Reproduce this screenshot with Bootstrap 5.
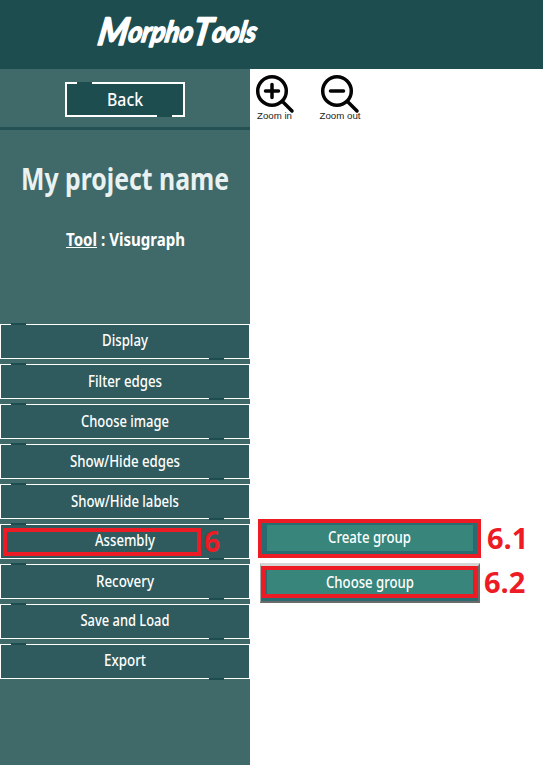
<!DOCTYPE html>
<html lang="en">
<head>
<meta charset="utf-8">
<meta name="viewport" content="width=device-width, initial-scale=1">
<title>MorphoTools</title>
<link href="https://cdn.jsdelivr.net/npm/bootstrap@5.3.0/dist/css/bootstrap.min.css" rel="stylesheet">
<style>
body{font-family:"Noto Sans","Open Sans",sans-serif;background:#fff;overflow:hidden;color:#fff}
.topbar{height:69px;background:#1e4d50}
.topbar svg,.tool svg,.title-art{display:block}
.title-art{overflow:visible}
.side{width:250px;height:696px;background:#406969}
.back-zone{height:61px;padding-top:13px;border-bottom:3px solid #245154}
.btn-frame{border-radius:0;color:#fff;padding:0;position:relative;white-space:nowrap}
.btn-frame:hover{color:#fff}
.btn-frame::before,.btn-frame::after{content:"";position:absolute;width:15px;height:2px;background:#1e4d50}
.btn-back{width:120px;height:35px;border:2px solid #fff;background:#1e4d50}
.btn-back::before{left:10px;top:-2px}
.btn-back::after{right:11px;bottom:-2px}
.menu{gap:5px;margin-top:69px}
.btn-side{width:250px;height:35px;border:1px solid #fff;background:#2f5b5e;display:block}
.btn-side::before{left:10px;top:-2px}
.btn-side::after{right:25px;bottom:-2px}
.btn-side svg,.btn-back svg,.grp svg{display:block;width:100%;height:100%}
text{font-family:"Noto Sans","Open Sans",sans-serif;text-anchor:middle;fill:#fff;font-weight:500}
.btn-side text,.grp text{font-size:15.5px}
.t-dark text{font-family:"Liberation Sans",sans-serif;font-weight:400;fill:#222;font-size:9.5px}
.brand{font-family:Lato,sans-serif;font-style:italic;font-weight:700;stroke:#fff;stroke-width:1.6px;stroke-linejoin:round;text-anchor:start}
.ring{position:absolute;border:4px solid #ed1c24;pointer-events:none}
.ring-six{left:2px;top:3px;width:198px;height:28px}
.num{font-family:"Open Sans","Noto Sans",sans-serif;font-weight:700;color:#ed1c24;line-height:1}
.num-six{position:absolute;left:203px;top:2px;font-size:28px}
.groups{margin-left:8px;margin-top:394px}
.grp{border-radius:0;padding:0;background:#37857b}
.grp-create{width:223px;height:39px;border:4px solid #ed1c24;background:#286c72;padding:2px 4px 3px 5px}
.grp-choose{width:220px;height:40px;margin-left:2px;background:#286c72;border-top:3px solid #d5d5d5;border-bottom:2px solid #6b6b6b;border-right:2px solid #6b6b6b;border-left:1px solid #aaa}
.ring-in{width:217px;height:32px;border:4px solid #ed1c24;padding:0 1px 0 2px}
.second{margin-top:5px}
.face{background:#37857b;height:100%}
.num-g{font-size:29px;margin-top:4px}
.num-a{margin-left:6px}
.num-b{margin-left:4px}
</style>
<script src="https://cdn.jsdelivr.net/npm/bootstrap@5.3.0/dist/js/bootstrap.bundle.min.js"></script>
</head>
<body>
<header class="topbar">
<svg width="300" height="69" role="img" aria-label="MorphoTools"><g transform="translate(8.500 0) skewX(-10)"><text class="brand" x="96" y="43" font-size="29" textLength="158" lengthAdjust="spacingAndGlyphs"><tspan font-size="38" dy="2">M</tspan><tspan dy="-3">orpho</tspan><tspan font-size="38" dy="3">T</tspan><tspan dy="-3">ools</tspan></text></g></svg>
</header>
<div class="d-flex">
<aside class="side flex-shrink-0">
<div class="back-zone d-flex justify-content-center">
<button class="btn btn-frame btn-back"><svg><text x="58" y="22" font-size="18" textLength="36" lengthAdjust="spacingAndGlyphs">Back</text></svg></button>
</div>
<svg class="title-art" width="250" height="125">
<text x="125" y="60" font-size="30" style="fill:#e9f1f1;font-weight:700" textLength="208" lengthAdjust="spacingAndGlyphs">My project name</text>
<text x="81.5" y="116" font-size="17.500" style="font-weight:700" textLength="31" lengthAdjust="spacingAndGlyphs">Tool</text>
<path d="M66 117.500H97" stroke="#fff"/>
<text x="143" y="116" font-size="17.500" style="font-weight:700" textLength="84" lengthAdjust="spacingAndGlyphs">: Visugraph</text>
</svg>
<nav class="menu d-flex flex-column">
<button class="btn btn-frame btn-side"><svg><text x="124" y="21" textLength="46" lengthAdjust="spacingAndGlyphs">Display</text></svg></button>
<button class="btn btn-frame btn-side"><svg><text x="124" y="22" textLength="74" lengthAdjust="spacingAndGlyphs">Filter edges</text></svg></button>
<button class="btn btn-frame btn-side"><svg><text x="124" y="22" textLength="88" lengthAdjust="spacingAndGlyphs">Choose image</text></svg></button>
<button class="btn btn-frame btn-side"><svg><text x="124" y="22" textLength="110" lengthAdjust="spacingAndGlyphs">Show/Hide edges</text></svg></button>
<button class="btn btn-frame btn-side"><svg><text x="124" y="22" textLength="108" lengthAdjust="spacingAndGlyphs">Show/Hide labels</text></svg></button>
<button class="btn btn-frame btn-side"><svg><text x="124" y="21" textLength="60" lengthAdjust="spacingAndGlyphs">Assembly</text></svg><span class="ring ring-six"></span><span class="num num-six">6</span></button>
<button class="btn btn-frame btn-side"><svg><text x="124" y="22" textLength="58" lengthAdjust="spacingAndGlyphs">Recovery</text></svg></button>
<button class="btn btn-frame btn-side"><svg><text x="124" y="21" textLength="89" lengthAdjust="spacingAndGlyphs">Save and Load</text></svg></button>
<button class="btn btn-frame btn-side"><svg><text x="124" y="21" textLength="42" lengthAdjust="spacingAndGlyphs">Export</text></svg></button>
</nav>
</aside>
<main class="flex-grow-1">
<div class="tool t-dark">
<svg width="130" height="56">
<g fill="none" stroke="#050505" stroke-width="3.5" stroke-linecap="round">
<circle cx="22" cy="22" r="14.3"/><path d="M32.500 32.500L42 42M15.500 22H28.500M22 15.500V28.500"/>
<circle cx="87" cy="22" r="14.300"/><path d="M97.500 32.500L107 42M80.500 22H93.500"/>
</g>
<text x="24.500" y="50" textLength="35" lengthAdjust="spacingAndGlyphs">Zoom in</text>
<text x="90" y="50" textLength="41" lengthAdjust="spacingAndGlyphs">Zoom out</text>
</svg>
</div>
<div class="groups">
<div class="d-flex">
<button class="btn grp grp-create flex-shrink-0"><div class="face"><svg><text x="102.500" y="18" textLength="83" lengthAdjust="spacingAndGlyphs">Create group</text></svg></div></button>
<span class="num num-g num-a">6.1</span>
</div>
<div class="d-flex second">
<div class="grp grp-choose flex-shrink-0"><div class="ring-in"><div class="face"><svg><text x="103" y="18" textLength="88" lengthAdjust="spacingAndGlyphs">Choose group</text></svg></div></div></div>
<span class="num num-g num-b">6.2</span>
</div>
</div>
</main>
</div>
</body>
</html>
